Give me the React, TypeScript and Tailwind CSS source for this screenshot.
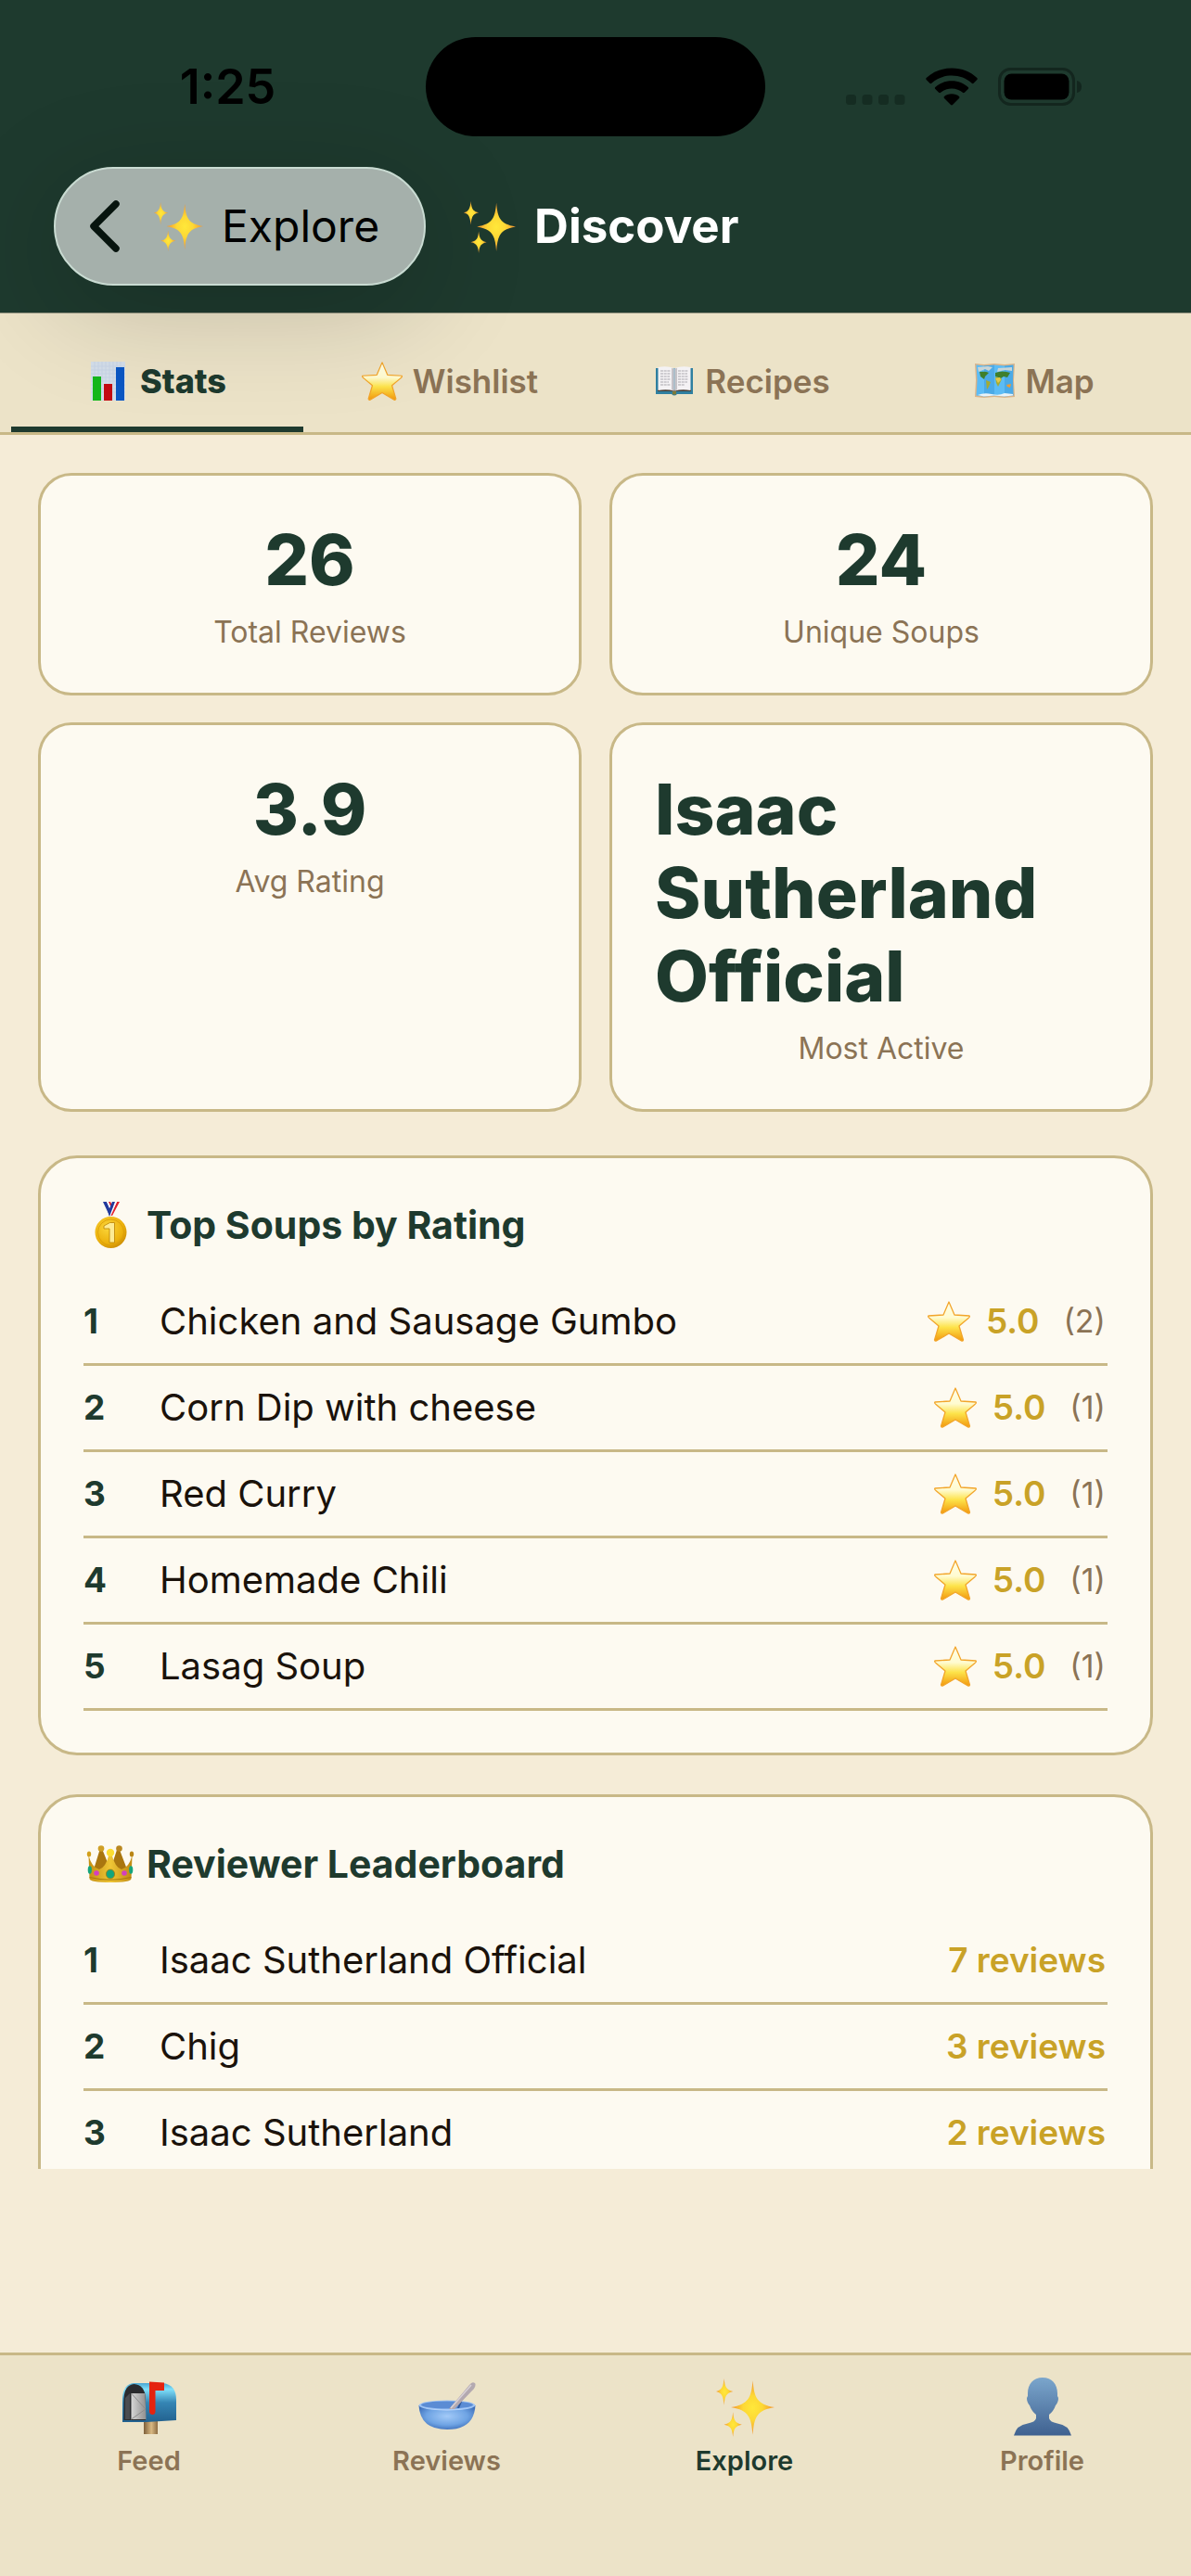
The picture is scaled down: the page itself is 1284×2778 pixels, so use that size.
import type { ReactNode } from "react";

type IconProps = { className?: string };

function Sparkles({ className = "" }: IconProps) {
  return (
    <svg viewBox="0 0 60 60" className={className} aria-hidden="true">
      <defs>
        <radialGradient id="spark">
          <stop offset="0" stopColor="#ffe83a" />
          <stop offset="0.45" stopColor="#fdd835" />
          <stop offset="1" stopColor="#f2912e" />
        </radialGradient>
      </defs>
      <g fill="url(#spark)">
        <path d="M38 3C39.500 20 42 27 60 30C42 33 39.500 40 38 58C36.500 40 34 33 16 30C34 27 36.500 20 38 3Z" />
        <path d="M9 1C9.800 9 11 12.500 18 14C11 15.500 9.800 19 9 28C8.200 19 7 15.500 1 14C7 12.500 8.200 9 9 1Z" />
        <path d="M18 35C18.800 43 20 46 27 47.500C20 49 18.800 52 18 60C17.200 52 16 49 9 47.500C16 46 17.200 43 18 35Z" />
      </g>
    </svg>
  );
}

function Star({ className = "" }: IconProps) {
  return (
    <svg viewBox="0 0 48 46" className={className} aria-hidden="true">
      <defs>
        <linearGradient id="star" x1="0" y1="0" x2="0" y2="1">
          <stop offset="0" stopColor="#ffffe8" />
          <stop offset="0.4" stopColor="#fffbd0" />
          <stop offset="0.65" stopColor="#fde34a" />
          <stop offset="1" stopColor="#f2980c" />
        </linearGradient>
      </defs>
      <path
        d="M24 2L30 16L46 17Q47 18 45 19.500L35 28L39.500 43Q39 44.500 37.500 44L24 36L10.500 44Q9 44.500 8.500 43L13 28L3 19.500Q1 18 2 17L18 16Z"
        fill="url(#star)"
        stroke="#f2a52b"
        strokeWidth="1.3"
        strokeLinejoin="round"
      />
    </svg>
  );
}

function Chart({ className = "" }: IconProps) {
  return (
    <svg viewBox="0 0 46 46" className={className} aria-hidden="true">
      <rect x="3" y="2" width="37" height="42" fill="#d5dfea" />
      <path
        d="M7 2V44M11 2V44M15 2V44M19 2V44M23 2V44M27 2V44M31 2V44M35 2V44M3 7H40M3 11H40M3 15H40M3 19H40M3 23H40M3 27H40M3 31H40M3 35H40"
        stroke="#c2d2e4"
        strokeWidth="0.6"
      />
      <rect x="5" y="18" width="9" height="26" fill="#14b81c" />
      <rect x="17" y="26" width="9" height="18" fill="#c40a12" />
      <rect x="30" y="8" width="9" height="36" fill="#0b57c4" />
    </svg>
  );
}

function Book({ className = "" }: IconProps) {
  return (
    <svg viewBox="0 0 46 46" className={className} aria-hidden="true">
      <path d="M3 9H43V37H26Q23 40 20 37H3Z" fill="#2f7fa0" />
      <path d="M5 34H22L23 36L24 34H41V32H5Z" fill="#4a3f36" />
      <path d="M5.500 8Q15 6 22.500 9V33.500Q15 31.500 5.500 33Z" fill="#f4f2f4" />
      <path d="M40.500 8Q31 6 23.500 9V33.500Q31 31.500 40.500 33Z" fill="#f4f2f4" />
      <path d="M20 9Q22 9 22.500 10V33.500L20 32.500ZM26 9Q24 9 23.500 10V33.500L26 32.500Z" fill="#c6c3c8" />
      <path
        d="M8 12H19M8 15H19M8 18H18M8 21H19M8 24H17M8 27H19M27 12H38M27 15H37M27 18H38M27 21H38M27 24H37M27 27H34"
        stroke="#a9a7ad"
        strokeWidth="1"
        strokeDasharray="3 0.7"
      />
      <rect x="21" y="34" width="4" height="3.500" fill="#7d7a3a" />
    </svg>
  );
}

function WorldMap({ className = "" }: IconProps) {
  return (
    <svg viewBox="0 0 46 46" className={className} aria-hidden="true">
      <path d="M2 4L12 5L23 4L34 5L45 4L44 22L45 40L34 41L23 40L12 41L2 40L3 22Z" fill="#d9b48a" />
      <path d="M3.500 5.500L12 6.500L23 5.500L34 6.500L43.500 5.500L43 22L43.500 38.500L34 39.500L23 38.500L12 39.500L3.500 38.500L4.500 22Z" fill="#5cbcf5" />
      <path d="M12 6.500L23 5.500V38.500L12 39.500ZM34 6.500L43.500 5.500L43 22L43.500 38.500L34 39.500Z" fill="#2f8fd0" opacity="0.38" />
      <path d="M5 8L16 7L21 8L17 12L13 10L6 13ZM27 9L42 8V12L34 11L26 13Z" fill="#c9d5d6" />
      <path d="M7 13Q13 12 17 14L13 18L12 21L8 18ZM24 14Q32 11 40 14L37 19L33 18L30 20L24 18Z" fill="#3f7f2c" />
      <path d="M14 22L19 24L17 29L15 32ZM24 19Q29 18 31 21L27 29L25 25Z" fill="#a5ab33" />
      <path d="M24 20L29 19L30 22L27 25Z" fill="#e4c948" />
      <path d="M36 27L41 26L40 30L37 29Z" fill="#ef9b33" />
      <path d="M5 38Q12 35 20 37T34 36L43 37V38.500L34 39.500L23 38.500L12 39.500Z" fill="#eaf3f7" />
    </svg>
  );
}

function Medal({ className = "" }: IconProps) {
  return (
    <svg viewBox="0 0 54 54" className={className} aria-hidden="true">
      <defs>
        <radialGradient id="medal" cx="0.4" cy="0.35" r="0.7">
          <stop offset="0" stopColor="#fbd63a" />
          <stop offset="0.7" stopColor="#ecb10c" />
          <stop offset="1" stopColor="#c98a05" />
        </radialGradient>
      </defs>
      <path d="M19 2H23L28 12L26 17Z" fill="#223a9c" />
      <path d="M23 2H26L29 9L28 14Z" fill="#ffffff" />
      <path d="M25 2H27L30 8L29 11Z" fill="#e0222c" />
      <path d="M37 2H34L27 17H29Z" fill="#e0222c" />
      <path d="M34 2H32L26 16L27 18Z" fill="#ffffff" />
      <path d="M32 2H29L24.500 13L26 18Z" fill="#223a9c" />
      <circle cx="27.500" cy="35" r="17" fill="url(#medal)" />
      <circle cx="27.500" cy="35" r="14" fill="none" stroke="#d99c08" strokeWidth="0.8" />
      <path d="M20 31V28L26.500 24.500H31.500V46H26V31Z" fill="#fdeb94" stroke="#c08a0a" strokeWidth="0.9" />
    </svg>
  );
}

function Crown({ className = "" }: IconProps) {
  return (
    <svg viewBox="0 0 54 54" className={className} aria-hidden="true">
      <defs>
        <linearGradient id="crown" x1="0" y1="0" x2="1" y2="0">
          <stop offset="0" stopColor="#c48f12" />
          <stop offset="0.5" stopColor="#efc636" />
          <stop offset="1" stopColor="#c08a12" />
        </linearGradient>
      </defs>
      <path d="M9 33L15.500 12H18.500L27 33L34 12H37L45 33Z" fill="#a9760f" />
      <circle cx="17" cy="10.500" r="3.300" fill="#cf9f25" />
      <circle cx="36.500" cy="10.500" r="3.300" fill="#b98720" />
      <path d="M3.500 18Q7 31 15 33Q22 31 25.500 17H28.500Q32 31 39 33Q47 31 50.500 18L49.500 43Q49 47 27 47Q5 47 4.500 43Z" fill="url(#crown)" />
      <path d="M4.500 41.500Q27 47 49.500 41.500" stroke="#a8790d" strokeWidth="1.200" fill="none" />
      <circle cx="27" cy="15" r="4.200" fill="#fbdd32" />
      <ellipse cx="4" cy="16.500" rx="2.200" ry="3" fill="#d2a01c" />
      <ellipse cx="50" cy="16.500" rx="2.200" ry="3" fill="#b98515" />
      <ellipse cx="27" cy="38" rx="4.600" ry="5" fill="#14a57c" stroke="#a8790d" strokeWidth="0.800" />
      <circle cx="12" cy="37" r="2.800" fill="#d23fc0" />
      <circle cx="42" cy="37" r="2.800" fill="#d23fc0" />
      <ellipse cx="4.800" cy="33.500" rx="2.100" ry="4.200" fill="#14a57c" />
      <ellipse cx="49.200" cy="33.500" rx="2.100" ry="4.200" fill="#14a57c" />
    </svg>
  );
}

function Mailbox({ className = "" }: IconProps) {
  return (
    <svg viewBox="0 0 64 64" className={className} aria-hidden="true">
      <defs>
        <linearGradient id="box" x1="0" y1="0" x2="0" y2="1">
          <stop offset="0" stopColor="#4aa6d2" />
          <stop offset="0.16" stopColor="#7fe0fa" />
          <stop offset="0.5" stopColor="#3585b4" />
          <stop offset="1" stopColor="#22618f" />
        </linearGradient>
        <linearGradient id="post" x1="0" y1="0" x2="1" y2="0">
          <stop offset="0" stopColor="#7d5f3a" />
          <stop offset="0.55" stopColor="#d9b983" />
          <stop offset="1" stopColor="#8c6c43" />
        </linearGradient>
        <linearGradient id="letter" x1="0" y1="0" x2="1" y2="0">
          <stop offset="0" stopColor="#d6d6d6" />
          <stop offset="1" stopColor="#8f8f8f" />
        </linearGradient>
      </defs>
      <rect x="26" y="46" width="15" height="15" fill="url(#post)" />
      <path d="M15 6H47Q61 8 61 24V46L29 48H3V22Q4 7 15 6Z" fill="url(#box)" />
      <path d="M4.500 46V23Q5 8 15.500 7Q27 8 28 22V46Z" fill="#2a2b2e" />
      <path d="M6 45V22L11 17V45Z" fill="#4b4c50" />
      <path d="M12.500 17H27.500L28.500 45H12.500Z" fill="url(#letter)" />
      <path d="M12.500 17L28 34L12.500 45" fill="none" stroke="#8c8c8c" strokeWidth="1" />
      <path d="M32 4.500L48 5.500V14H38.500V37Q38 40 35.500 40Q32.500 40 32 37Z" fill="#e4230f" />
    </svg>
  );
}

function Bowl({ className = "" }: IconProps) {
  return (
    <svg viewBox="0 0 64 64" className={className} aria-hidden="true">
      <defs>
        <radialGradient id="bowl" cx="0.5" cy="0.45" r="0.6">
          <stop offset="0" stopColor="#a3caf8" />
          <stop offset="0.6" stopColor="#6fa4e4" />
          <stop offset="1" stopColor="#3b6cb8" />
        </radialGradient>
      </defs>
      <path d="M1.500 30Q3 56 32 56Q61 56 62.500 30Z" fill="url(#bowl)" />
      <ellipse cx="32" cy="30" rx="30.500" ry="5.500" fill="#9cc2f4" />
      <ellipse cx="32" cy="29.500" rx="28" ry="4" fill="#5b8cd4" />
      <path d="M43 33L46 25L48 26L45 33Z" fill="#2e5798" />
      <path d="M34 34L56 8Q59 4 62 6Q63.500 8 61 12L40 34Z" fill="#b3a9b0" />
      <path d="M36 33L58 8" stroke="#d9d2d6" strokeWidth="1.500" />
      <path d="M3 32Q32 39 61 32Q32 37 3 32Z" fill="#b6d4fb" />
    </svg>
  );
}

function Person({ className = "" }: IconProps) {
  return (
    <svg viewBox="0 0 64 64" className={className} aria-hidden="true">
      <defs>
        <linearGradient id="person" x1="0" y1="0" x2="0" y2="1">
          <stop offset="0" stopColor="#7ba6cc" />
          <stop offset="1" stopColor="#3f6190" />
        </linearGradient>
      </defs>
      <path
        d="M32 0C42 0 48 7 48 17L48 20Q50 22 48 27Q47 29 46 30Q44 36 39 40V44Q40 48 48 49.500Q60 51 63 62.500H1Q4 51 16 49.500Q24 48 25 44V40Q20 36 18 30Q17 29 16 27Q14 22 16 20L16 17C16 7 22 0 32 0Z"
        fill="url(#person)"
      />
    </svg>
  );
}

function StatusIcons() {
  return (
    <div className="flex items-end gap-[22px]">
      <svg viewBox="0 0 64 12" className="h-3 w-16" aria-hidden="true">
        <g fill="#152c22">
          <rect x="0" y="0" width="11" height="11" rx="3.500" />
          <rect x="17.500" y="0" width="11" height="11" rx="3.500" />
          <rect x="35" y="0" width="11" height="11" rx="3.500" />
          <rect x="52.500" y="0" width="11" height="11" rx="3.500" />
        </g>
      </svg>
      <svg viewBox="0 0 56 41" className="h-[41px] w-14" role="img" aria-label="Wi-Fi">
        <path d="M28 0.500C39 0.500 48.500 4.500 55.300 11Q56.200 12 55.300 13L51.600 16.800Q50.600 17.600 49.700 16.800C43.900 11.500 36.500 8.600 28 8.600C19.500 8.600 12.100 11.500 6.300 16.800Q5.400 17.600 4.400 16.800L0.700 13Q-0.200 12 0.700 11C7.500 4.500 17 0.500 28 0.500Z" />
        <path d="M28 14.300C35.200 14.300 41 16.800 45.700 21Q46.600 22 45.700 23L41.900 26.700Q40.900 27.600 39.900 26.800C36.700 24 32.700 22.400 28 22.400C23.300 22.400 19.300 24 16.100 26.800Q15.100 27.600 14.100 26.700L10.300 23Q9.400 22 10.300 21C15 16.800 20.800 14.300 28 14.300Z" />
        <path d="M28 28.200C31.200 28.200 34 29.200 36 31Q37 32 36 33L29 40Q28 40.800 27 40L20 33Q19 32 20 31C22 29.200 24.800 28.200 28 28.200Z" />
      </svg>
      <svg viewBox="0 0 90 41" className="h-[41px] w-[90px]" role="img" aria-label="Battery full">
        <rect x="1.500" y="1.500" width="80" height="38" rx="12" fill="none" stroke="#13261e" strokeWidth="3" />
        <rect x="6.500" y="6.500" width="70" height="28" rx="8" />
        <path d="M85 14Q90 15 90 20.500T85 27Z" fill="#13261e" />
      </svg>
    </div>
  );
}

const tabs = [
  { label: "Stats", Icon: Chart },
  { label: "Wishlist", Icon: Star },
  { label: "Recipes", Icon: Book },
  { label: "Map", Icon: WorldMap },
];

const stats = [
  { value: "26", label: "Total Reviews" },
  { value: "24", label: "Unique Soups" },
  { value: "3.9", label: "Avg Rating" },
  { value: "Isaac Sutherland Official", label: "Most Active" },
];

const soups = [
  { name: "Chicken and Sausage Gumbo", rating: "5.0", count: 2 },
  { name: "Corn Dip with cheese", rating: "5.0", count: 1 },
  { name: "Red Curry", rating: "5.0", count: 1 },
  { name: "Homemade Chili", rating: "5.0", count: 1 },
  { name: "Lasag Soup", rating: "5.0", count: 1 },
];

const reviewers = [
  { name: "Isaac Sutherland Official", reviews: 7 },
  { name: "Chig", reviews: 3 },
  { name: "Isaac Sutherland", reviews: 2 },
];

const navItems = [
  { label: "Feed", Icon: Mailbox },
  { label: "Reviews", Icon: Bowl },
  { label: "Explore", Icon: Sparkles },
  { label: "Profile", Icon: Person },
];

function RankedCard({ icon, title, children }: { icon: ReactNode; title: string; children: ReactNode }) {
  return (
    <section className="rounded-[42px] border-3 border-[#c8b887] bg-[#fdfaf1] px-[46px] py-[45px]">
      <h2 className="mb-8 flex items-center gap-3 pl-0.5 text-[41px] leading-[52px] font-bold text-[#1e3a2e]">
        {icon}
        {title}
      </h2>
      <ol>{children}</ol>
    </section>
  );
}

function RankedRow({ rank, name, children }: { rank: number; name: string; children: ReactNode }) {
  return (
    <li className="flex items-center border-b-3 border-[#c8b887] pr-0.5 leading-[90px]">
      <span className="w-[82px] text-[37px] font-bold text-[#1e3a2e]">{rank}</span>
      <span className="flex-1 text-[40px] text-[#1a120b]">{name}</span>
      {children}
    </li>
  );
}

export default function App() {
  return (
    <div className="flex h-screen flex-col bg-[#f5ecd7] font-[Inter,sans-serif]">
      <header className="relative z-10 border-b border-[#8d8f7c] bg-[#1e3a2e] pb-[29px]">
        <div className="flex items-center pt-10 text-black">
          <div className="flex flex-1 justify-center pl-8 text-[52px] font-semibold">1:25</div>
          <div className="h-[107px] w-[366px] rounded-full bg-black" />
          <div className="flex flex-1 justify-center pr-8">
            <StatusIcons />
          </div>
        </div>
        <div className="mt-[33px] flex items-center gap-10 px-[58px]">
          <button
            type="button"
            className="flex h-32 items-center rounded-full border-2 border-[#c9dbd2] bg-[#a5b0ab] pr-12 pl-9 text-5xl text-black shadow-[0_24px_120px_rgba(0,0,0,0.19)]"
          >
            <svg viewBox="0 0 34 56" className="h-14 w-[34px]" fill="none" aria-hidden="true">
              <path d="M29 4L5 28L29 52" stroke="#07140e" strokeWidth="7.500" strokeLinecap="round" strokeLinejoin="round" />
            </svg>
            <Sparkles className="mr-5 ml-[35px] size-[54px]" />
            Explore
          </button>
          <h1 className="flex items-center gap-5 text-[51px] font-bold text-white">
            <Sparkles className="size-[57px]" />
            Discover
          </h1>
        </div>
      </header>

      <div role="tablist" className="flex border-b-3 border-[#c8b887] bg-[#ece3c8] px-3">
        {tabs.map(({ label, Icon }, i) => (
          <button
            key={label}
            type="button"
            role="tab"
            aria-selected={i === 0}
            className={
              i === 0
                ? "flex h-32 flex-1 items-center justify-center gap-2.5 border-b-6 border-[#1e3a2e] pt-6 text-4xl font-extrabold text-[#1e3a2e]"
                : "flex h-32 flex-1 items-center justify-center gap-2.5 border-b-6 border-transparent pt-6 text-[35px] font-semibold text-[#8b7355]"
            }
          >
            <Icon className="size-[46px]" />
            {label}
          </button>
        ))}
      </div>

      <main className="mb-[198px] min-h-0 flex-1 overflow-y-auto px-[41px] pt-[41px] [scrollbar-width:none]">
        <div className="mb-[47px] grid grid-cols-2 gap-x-[30px] gap-y-[29px]">
          {stats.map((s) => (
            <div
              key={s.label}
              className="flex flex-col items-center rounded-[36px] border-3 border-[#c8b887] bg-[#fdfaf1] px-[46px] pt-[46px] pb-[45px]"
            >
              <div className="text-[75px] leading-[90px] font-extrabold text-[#1e3a2e]">{s.value}</div>
              <div className="mt-3 text-[32px] leading-[41px] text-[#8b7355]">{s.label}</div>
            </div>
          ))}
        </div>

        <div className="flex flex-col gap-[42px]">
          <RankedCard icon={<Medal className="size-[54px]" />} title="Top Soups by Rating">
            {soups.map((s, i) => (
              <RankedRow key={s.name} rank={i + 1} name={s.name}>
                <Star className="mr-4 h-[46px] w-12" />
                <span className="mr-[26px] text-[37px] font-semibold text-[#c9a227]">{s.rating}</span>
                <span className="text-[34px] text-[#8b7355]">({s.count})</span>
              </RankedRow>
            ))}
          </RankedCard>
          <RankedCard icon={<Crown className="size-[54px]" />} title="Reviewer Leaderboard">
            {reviewers.map((r, i) => (
              <RankedRow key={r.name} rank={i + 1} name={r.name}>
                <span className="text-[37px] font-semibold text-[#c9a227]">{r.reviews} reviews</span>
              </RankedRow>
            ))}
          </RankedCard>
        </div>
      </main>

      <nav className="flex border-t-3 border-[#c8b887] bg-[#ece3c8] pt-6 pb-[104px]">
        {navItems.map(({ label, Icon }) => (
          <a
            key={label}
            href={`#${label.toLowerCase()}`}
            aria-current={label === "Explore" ? "page" : undefined}
            className={
              label === "Explore"
                ? "flex flex-1 flex-col items-center gap-1.5 text-[29px] leading-10 font-semibold text-[#1e3a2e]"
                : "flex flex-1 flex-col items-center gap-1.5 text-[29px] leading-10 font-semibold text-[#8b7355]"
            }
          >
            <Icon className="size-16" />
            {label}
          </a>
        ))}
      </nav>
    </div>
  );
}
